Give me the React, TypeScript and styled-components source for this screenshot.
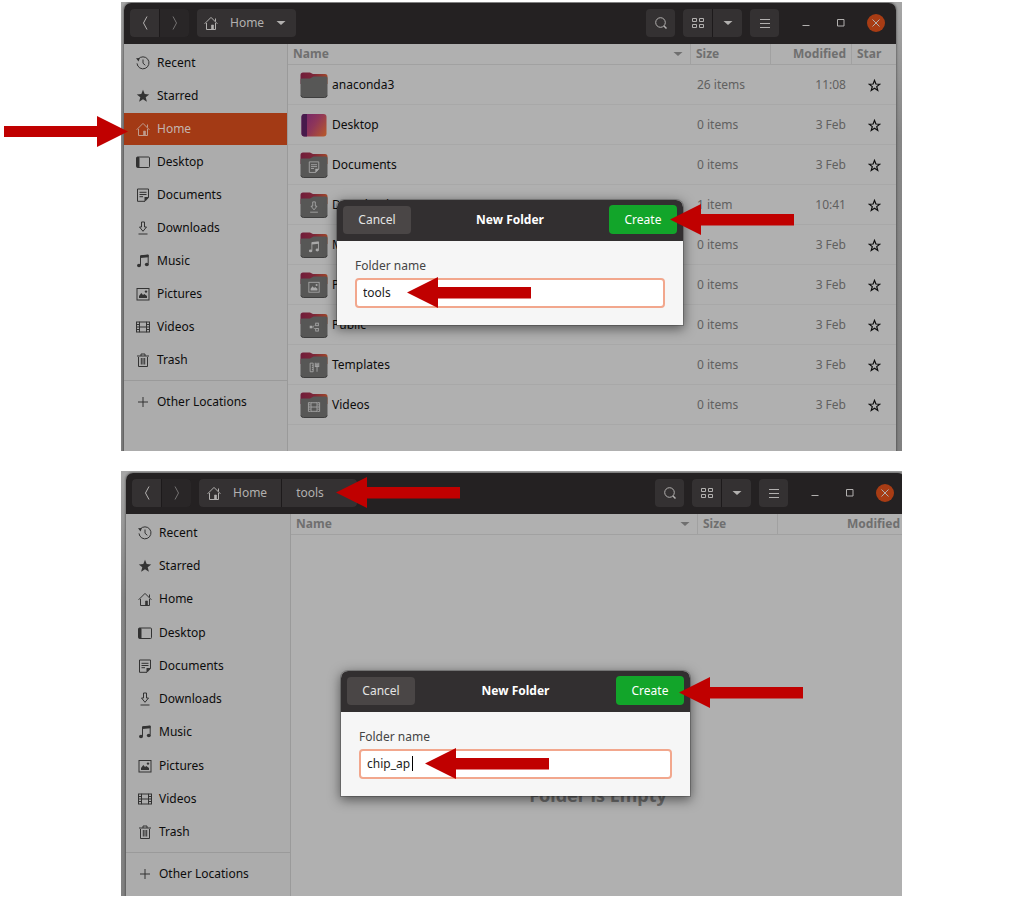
import React from "react";
import styled, { createGlobalStyle } from "styled-components";

const GlobalStyle = createGlobalStyle`
  *, *::before, *::after { box-sizing: border-box; }
  body {
    margin: 0;
    background: #ffffff;
    font-family: "Noto Sans", "Open Sans", sans-serif;
    font-size: 12px;
    line-height: 16px;
    color: #0c0c0c;
  }
  button, input { font: inherit; color: inherit; margin: 0; }
`;

const Page = styled.main`
  display: flex;
  flex-direction: column;
  gap: 20px;
  padding: 2px 120px 5px 121px;
`;

const Screen = styled.section`
  position: relative;
`;

const Desktop = styled.div<{ $height: number; $bleed?: boolean }>`
  position: relative;
  display: flex;
  min-height: ${(p) => p.$height}px;
  padding: ${(p) => (p.$bleed ? "2px 0 0 5px" : "1px 6px 0 3px")};
  overflow: hidden;
  background: linear-gradient(#a6a6a6, #868686 30%, #808080);
`;

const Window = styled.div<{ $bleed?: boolean }>`
  position: relative;
  display: flex;
  flex: 1;
  flex-direction: column;
  margin-right: ${(p) => (p.$bleed ? "-3px" : "0")};
  border-radius: 7px 7px 0 0;
  background: #b0b0b0;
  box-shadow: 0 0 2px 1px rgba(0, 0, 0, 0.3);
`;

const HeaderBar = styled.header`
  display: flex;
  align-items: center;
  justify-content: space-between;
  height: 41px;
  padding: 0 11px 1px 6px;
  border-radius: 7px 7px 0 0;
  background: #242122;
  color: #b2b0af;
`;

const HeaderSide = styled.div`
  display: flex;
  align-items: center;
  gap: 8px;
`;

const Linked = styled.div`
  display: flex;
  gap: 1px;
  border-radius: 4px;
  background: #1d1a1b;
  overflow: hidden;
`;

const BarButton = styled.button<{ $muted?: boolean }>`
  display: flex;
  align-items: center;
  justify-content: center;
  width: 29px;
  height: 28px;
  padding: 0;
  border: 0;
  background: ${(p) => (p.$muted ? "#292627" : "#343132")};
  color: ${(p) => (p.$muted ? "#757373" : "#b2b0af")};
`;

const PathButton = styled(BarButton)`
  width: auto;
  gap: 12px;
  padding: 0 14px 0 8px;
`;

const PathLeaf = styled(PathButton)`
  padding: 0 33px 0 14px;
`;

const HomePath = styled(PathButton)`
  padding: 0 10px 0 7px;
`;

const WindowButtons = styled.div`
  display: flex;
  gap: 17px;
  padding-left: 10px;
`;

const WindowButton = styled.button<{ $close?: boolean }>`
  display: flex;
  align-items: center;
  justify-content: center;
  width: 18px;
  height: 18px;
  padding: 0;
  border: 0;
  border-radius: 9px;
  background: ${(p) => (p.$close ? "#a83c14" : "transparent")};
  color: #b2b0af;
`;

const Body = styled.div`
  display: flex;
  flex: 1;
`;

const Sidebar = styled.nav<{ $width: number }>`
  flex: none;
  width: ${(p) => p.$width}px;
  padding-top: 3px;
  border-right: 1px solid #9a9a9a;
  background: #acacac;
`;

const Places = styled.ul<{ $height: number }>`
  display: flex;
  flex-direction: column;
  justify-content: space-between;
  min-height: ${(p) => p.$height}px;
  margin: 0;
  padding: 0;
  list-style: none;
`;

const Place = styled.a<{ $active?: boolean }>`
  display: flex;
  align-items: center;
  gap: 7px;
  height: 32px;
  padding-left: 12px;
  background: ${(p) => (p.$active ? "#a33a15" : "transparent")};
  color: ${(p) => (p.$active ? "#c4b4ae" : "#0c0c0c")};
  text-decoration: none;

  svg { color: ${(p) => (p.$active ? "#bf9c8e" : "#333333")}; }
`;

const OtherPlaces = styled.div`
  margin-top: 4px;
  padding-top: 5px;
  border-top: 1px solid #9a9a9a;
`;

const Content = styled.div`
  display: flex;
  flex: 1;
  flex-direction: column;
  min-width: 0;
`;

const Files = styled.table`
  width: 100%;
  table-layout: fixed;
  border-spacing: 0;
`;

const HeadCell = styled.th<{ $width?: number; $right?: boolean }>`
  width: ${(p) => (p.$width ? p.$width + "px" : "auto")};
  height: 21px;
  padding: 0 5px;
  border-bottom: 1px solid #a1a1a1;
  color: #6f6f6f;
  font-weight: 700;
  text-align: ${(p) => (p.$right ? "right" : "left")};

  & + & { border-left: 1px solid #a1a1a1; }
`;

const SortLabel = styled.div`
  display: flex;
  align-items: center;
  justify-content: space-between;
  padding-right: 2px;
`;

const Cell = styled.td<{ $align?: string }>`
  height: 40px;
  padding: 0 5px 0 7px;
  border-bottom: 1px solid #a8a8a8;
  color: #606060;
  text-align: ${(p) => p.$align || "left"};
`;

const FileName = styled.div`
  display: flex;
  align-items: center;
  gap: 4px;
  padding-left: 5px;
  color: #0c0c0c;
`;

const StarButton = styled.button`
  display: inline-flex;
  padding: 0;
  border: 0;
  background: none;
  color: #0c0c0c;
  vertical-align: middle;
`;

const EmptyNote = styled.p`
  margin: 248px 0 0;
  color: #6c6c6c;
  font-size: 18px;
  line-height: 24px;
  font-weight: 700;
  text-align: center;
`;

const Overlay = styled.div<{ $top: number }>`
  position: absolute;
  inset: 0;
  display: flex;
  align-items: flex-start;
  justify-content: center;
  padding-top: ${(p) => p.$top}px;
`;

const DialogBox = styled.form<{ $width: number }>`
  position: relative;
  width: ${(p) => p.$width}px;
  border-radius: 7px 7px 0 0;
  background: #f6f6f6;
  box-shadow: 0 3px 12px 1px rgba(0, 0, 0, 0.5), 0 0 0 1px rgba(0, 0, 0, 0.2);
`;

const DialogHeader = styled.div`
  display: flex;
  align-items: center;
  justify-content: space-between;
  height: 41px;
  padding: 0 6px 2px;
  border-radius: 7px 7px 0 0;
  background: #322f30;
  color: #ffffff;
`;

const DialogTitle = styled.h2`
  margin: 0;
  font-size: 12px;
  line-height: 16px;
  font-weight: 700;
`;

const DialogButton = styled.button<{ $primary?: boolean }>`
  width: 68px;
  height: ${(p) => (p.$primary ? 29 : 28)}px;
  padding: 0;
  border: 0;
  border-radius: 4px;
  background: ${(p) => (p.$primary ? "#12a52a" : "#4a4646")};
  color: ${(p) => (p.$primary ? "#ffffff" : "#e4e4e4")};
`;

const DialogBody = styled.div`
  display: flex;
  flex-direction: column;
  gap: 4px;
  padding: 17px 18px;
`;

const FieldLabel = styled.label`
  color: #454545;
`;

const Field = styled.div`
  position: relative;
`;

const TextBox = styled.input`
  display: block;
  width: 100%;
  height: 30px;
  padding: 0 6px 1px;
  border: 2px solid #f2a78d;
  border-radius: 4px;
  background: #ffffff;
  color: #1c1c1c;
  outline: none;
`;

const TextCaret = styled.span`
  position: absolute;
  top: 7px;
  left: 53px;
  width: 1px;
  height: 15px;
  background: #000000;
`;

const Pointer = styled.svg<{ $left: number; $top: number }>`
  position: absolute;
  z-index: 2;
  left: ${(p) => p.$left}px;
  top: ${(p) => p.$top}px;
  width: 124px;
  height: 31px;
  fill: #c00000;
`;

function Arrow({ left, top, flip }: { left: number; top: number; flip?: boolean }) {
  return (
    <Pointer $left={left} $top={top} viewBox="0 0 124 31" aria-hidden="true">
      <path
        d={flip ? "M124 15.500 93 0V10H0V21H93V31Z" : "M0 15.500 31 0V10H124V21.500H31V31Z"}
      />
    </Pointer>
  );
}

const GLYPHS: Record<string, React.ReactNode> = {
  recent: (
    <>
      <path d="M2.200 3.200A6 6 0 1 1 1 7.400" />
      <path d="M7 3.500V7.200L9.300 9.300" />
      <path d="M0 2.200 3.800 2 2.600 5.400Z" fill="currentColor" stroke="none" />
    </>
  ),
  starred: (
    <path
      d="M7 .8 8.700 5.100 13.200 5.400 9.700 8.300 10.900 12.800 7 10.300 3.100 12.800 4.300 8.300 .8 5.400 5.300 5.100Z"
      fill="currentColor"
      stroke="none"
    />
  ),
  home: (
    <>
      <path d="M.6 7.800 7 1.400 13.400 7.800M2.500 7V13.500H11.500V7M11.500 5.500V2.500" />
      <path d="M7.500 13V9H9.500V13Z" fill="currentColor" strokeWidth=".6" />
    </>
  ),
  desktop: (
    <>
      <rect x=".5" y="2" width="13" height="10.500" rx="1" />
      <path d="M1 2.500H3V12H1Z" fill="currentColor" />
    </>
  ),
  documents: (
    <>
      <path d="M1.500 1H12.500V9.500L9 13.300H1.500Z" />
      <path d="M3.500 4.300H10.500M3.500 6.500H10.500M3.500 8.700H7" />
      <path d="M8.500 13.500V9H12.800Z" fill="currentColor" stroke="none" />
    </>
  ),
  downloads: (
    <path d="M5.500 1H8.500V6H10.500L7 10.300 3.500 6H5.500ZM2.500 13H11.500" />
  ),
  music: (
    <>
      <path d="M4.500 11V1.800L12.200 1V9.700" />
      <path d="M4.500 1.500 12.500 .8V3.200L4.500 4Z" fill="currentColor" stroke="none" />
      <ellipse cx="3" cy="11.500" rx="2" ry="1.700" fill="currentColor" stroke="none" />
      <ellipse cx="10.800" cy="10.500" rx="2" ry="1.700" fill="currentColor" stroke="none" />
    </>
  ),
  pictures: (
    <>
      <rect x="1" y="1.500" width="12" height="11.500" />
      <path d="M3 11V9L5.300 6 7 8 8.300 7 11 9V11Z" fill="currentColor" stroke="none" />
      <circle cx="10" cy="4.600" r="1.200" fill="currentColor" stroke="none" />
    </>
  ),
  videos: (
    <>
      <path d="M3.500 2H10.500M3.500 12H10.500M3.500 7H10.500M3.500 1.500V12.500M10.500 1.500V12.500" />
      <path d="M.5 1.500V12.500M13.500 1.500V12.500" />
      <path d="M2 1.500V12.500M12 1.500V12.500" strokeWidth="2" strokeDasharray="1 1.500" />
    </>
  ),
  trash: (
    <>
      <path d="M2.500 4V13.500H11.500V4M1 3H13M5 3V1H9V3" />
      <path d="M5.300 5V11.500M7 5V11.500M8.700 5V11.500" />
    </>
  ),
  other: <path d="M7 2V12M2 7H12" />,
  public: (
    <>
      <path d="M9 4.500 5 7 9 9.700" strokeDasharray="1.500 1" />
      <rect x="2" y="5.500" width="3" height="3" fill="currentColor" stroke="none" />
      <rect x="9" y="2.500" width="3" height="3" />
      <rect x="9" y="8.700" width="3" height="3" />
    </>
  ),
  templates: (
    <>
      <path d="M2.500 2.500H6V12.500H2.500ZM4.500 5H6M4.500 7.500H6M4.500 10H6" />
      <path d="M8.500 2V7M10.500 2V12.500M12.500 2V7M8.500 6.500H12.500M9.500 3V7M11.500 3V7" />
    </>
  ),
};

function Glyph({ name }: { name: string }) {
  return (
    <svg width="14" height="14" viewBox="0 0 14 14" fill="none" stroke="currentColor" aria-hidden="true">
      {GLYPHS[name]}
    </svg>
  );
}

function FolderIcon({ glyph }: { glyph?: string }) {
  return (
    <svg width="28" height="28" viewBox="0 0 28 28" fill="none" aria-hidden="true">
      <defs>
        <linearGradient id="folder-back" x1="0" x2="1">
          <stop offset="0" stopColor="#701c3a" />
          <stop offset=".5" stopColor="#7d2638" />
          <stop offset="1" stopColor="#a0482a" />
        </linearGradient>
      </defs>
      <path d="M.5 4Q.5 1.500 3 1.500H10L13 3H25Q27.500 3 27.500 5.500V13H.5Z" fill="url(#folder-back)" />
      <path
        d="M.5 8.500Q.5 7.500 2 7.500H10L13.500 5.500H26Q27.500 5.500 27.500 7V24Q27.500 26.500 25 26.500H3Q.5 26.500 .5 24Z"
        fill="#575756"
      />
      <path d="M1 24.500Q1.500 26.500 3.500 26.500H24.500Q26.500 26.500 27 24.500" stroke="#3e3e3e" />
      {glyph && (
        <g transform="translate(8 10) scale(.86)" stroke="#a9a9a9" color="#a9a9a9">
          {GLYPHS[glyph]}
        </g>
      )}
    </svg>
  );
}

function DesktopIcon() {
  return (
    <svg width="28" height="28" viewBox="0 0 28 28" aria-hidden="true">
      <defs>
        <linearGradient id="wallpaper" x1="0" y1=".2" x2="1" y2=".8">
          <stop offset="0" stopColor="#74266a" />
          <stop offset=".5" stopColor="#8f3659" />
          <stop offset="1" stopColor="#b4562f" />
        </linearGradient>
      </defs>
      <rect x="1.500" y="3" width="25" height="22.500" rx="3" fill="url(#wallpaper)" />
      <path d="M7 3H4.500Q1.500 3 1.500 6V22.500Q1.500 25.500 4.500 25.500H7Z" fill="#471a4c" />
    </svg>
  );
}

function Caret() {
  return (
    <svg width="10" height="6" viewBox="0 0 10 6" fill="currentColor" aria-hidden="true">
      <path d="M.5 1H9.500L5 5Z" />
    </svg>
  );
}

function Chevron({ forward }: { forward?: boolean }) {
  return (
    <svg width="14" height="14" viewBox="0 0 14 14" fill="none" stroke="currentColor" aria-hidden="true">
      <path d={forward ? "M5 .5 8.500 7 5 13.500" : "M9 .5 5.500 7 9 13.500"} />
    </svg>
  );
}

function StarOutline() {
  return (
    <svg width="13" height="13" viewBox="0 0 14 14" fill="none" stroke="currentColor" strokeWidth="1.300" aria-hidden="true">
      <path d="M7 1.500 8.500 5.400 12.700 5.600 9.400 8.200 10.500 12.300 7 10 3.500 12.300 4.600 8.200 1.300 5.600 5.500 5.400Z" />
    </svg>
  );
}

function HeaderControls() {
  return (
    <HeaderSide>
      <Linked>
        <BarButton aria-label="Search">
          <svg width="12" height="12" viewBox="0 0 12 12" fill="none" stroke="currentColor">
            <circle cx="5.500" cy="5.500" r="4.800" />
            <path d="M9 9 11.500 11.500" strokeWidth="1.500" />
          </svg>
        </BarButton>
      </Linked>
      <Linked>
        <BarButton aria-label="Icon view">
          <svg width="12" height="12" viewBox="0 0 12 12" fill="none" stroke="currentColor">
            <path d="M.5 1.500H4.500V4.500H.5ZM7.500 1.500H11.500V4.500H7.500ZM.5 7.500H4.500V10.500H.5ZM7.500 7.500H11.500V10.500H7.500Z" />
          </svg>
        </BarButton>
        <BarButton aria-label="View options">
          <Caret />
        </BarButton>
      </Linked>
      <Linked>
        <BarButton aria-label="Menu">
          <svg width="10" height="10" viewBox="0 0 10 10" stroke="currentColor">
            <path d="M0 1.500H10M0 5.500H10M0 9.500H10" />
          </svg>
        </BarButton>
      </Linked>
      <WindowButtons>
        <WindowButton aria-label="Minimize">
          <svg width="8" height="8" viewBox="0 0 8 8" stroke="currentColor">
            <path d="M.5 6.500H7.500" />
          </svg>
        </WindowButton>
        <WindowButton aria-label="Maximize">
          <svg width="8" height="8" viewBox="0 0 8 8" fill="none" stroke="currentColor">
            <path d="M.5 .5H7V7H.5Z" />
          </svg>
        </WindowButton>
        <WindowButton $close aria-label="Close">
          <svg width="8" height="8" viewBox="0 0 8 8" stroke="currentColor">
            <path d="M.5 .5 7.500 7.500M7.500 .5 .5 7.500" />
          </svg>
        </WindowButton>
      </WindowButtons>
    </HeaderSide>
  );
}

const PLACES = [
  ["recent", "Recent"],
  ["starred", "Starred"],
  ["home", "Home"],
  ["desktop", "Desktop"],
  ["documents", "Documents"],
  ["downloads", "Downloads"],
  ["music", "Music"],
  ["pictures", "Pictures"],
  ["videos", "Videos"],
  ["trash", "Trash"],
];

function PlacesBar({ width, height, active }: { width: number; height: number; active?: string }) {
  return (
    <Sidebar $width={width} aria-label="Places">
      <Places $height={height}>
        {PLACES.map(([id, label]) => (
          <li key={id}>
            <Place href={"#" + id} $active={id === active}>
              <Glyph name={id} />
              {label}
            </Place>
          </li>
        ))}
      </Places>
      <OtherPlaces>
        <Place href="#other">
          <Glyph name="other" />
          Other Locations
        </Place>
      </OtherPlaces>
    </Sidebar>
  );
}

const FILES = [
  { name: "anaconda3", size: "26 items", modified: "11:08" },
  { name: "Desktop", size: "0 items", modified: "3 Feb" },
  { name: "Documents", size: "0 items", modified: "3 Feb", glyph: "documents" },
  { name: "Downloads", size: "1 item", modified: "10:41", glyph: "downloads" },
  { name: "Music", size: "0 items", modified: "3 Feb", glyph: "music" },
  { name: "Pictures", size: "0 items", modified: "3 Feb", glyph: "pictures" },
  { name: "Public", size: "0 items", modified: "3 Feb", glyph: "public" },
  { name: "Templates", size: "0 items", modified: "3 Feb", glyph: "templates" },
  { name: "Videos", size: "0 items", modified: "3 Feb", glyph: "videos" },
];

function NameHead() {
  return (
    <HeadCell>
      <SortLabel>
        Name
        <Caret />
      </SortLabel>
    </HeadCell>
  );
}

interface DialogProps {
  id: string;
  top: number;
  width: number;
  value: string;
  caret?: boolean;
  children: React.ReactNode;
}

function NewFolderDialog({ id, top, width, value, caret, children }: DialogProps) {
  return (
    <Overlay $top={top}>
      <DialogBox $width={width} role="dialog" aria-label="New Folder" onSubmit={(e) => e.preventDefault()}>
        <DialogHeader>
          <DialogButton type="button">Cancel</DialogButton>
          <DialogTitle>New Folder</DialogTitle>
          <DialogButton $primary type="submit">
            Create
          </DialogButton>
        </DialogHeader>
        <DialogBody>
          <FieldLabel htmlFor={id}>Folder name</FieldLabel>
          <Field>
            <TextBox id={id} type="text" defaultValue={value} />
            {caret && <TextCaret />}
          </Field>
        </DialogBody>
        {children}
      </DialogBox>
    </Overlay>
  );
}

function NavButtons() {
  return (
    <Linked>
      <BarButton aria-label="Back">
        <Chevron />
      </BarButton>
      <BarButton $muted aria-label="Forward">
        <Chevron forward />
      </BarButton>
    </Linked>
  );
}

export default function App() {
  return (
    <>
      <GlobalStyle />
      <Page>
        <Screen>
          <Desktop $height={449}>
            <Window>
              <HeaderBar>
                <HeaderSide>
                  <NavButtons />
                  <Linked>
                    <HomePath>
                      <Glyph name="home" />
                      Home
                      <Caret />
                    </HomePath>
                  </Linked>
                </HeaderSide>
                <HeaderControls />
              </HeaderBar>
              <Body>
                <PlacesBar width={164} height={329} active="home" />
                <Content>
                  <Files>
                    <thead>
                      <tr>
                        <NameHead />
                        <HeadCell $width={80}>Size</HeadCell>
                        <HeadCell $width={81} $right>
                          Modified
                        </HeadCell>
                        <HeadCell $width={45}>Star</HeadCell>
                      </tr>
                    </thead>
                    <tbody>
                      {FILES.map((f) => (
                        <tr key={f.name}>
                          <Cell>
                            <FileName>
                              {f.name === "Desktop" ? <DesktopIcon /> : <FolderIcon glyph={f.glyph} />}
                              {f.name}
                            </FileName>
                          </Cell>
                          <Cell>{f.size}</Cell>
                          <Cell $align="right">{f.modified}</Cell>
                          <Cell $align="center">
                            <StarButton aria-label={"Star " + f.name}>
                              <StarOutline />
                            </StarButton>
                          </Cell>
                        </tr>
                      ))}
                    </tbody>
                  </Files>
                </Content>
              </Body>
              <NewFolderDialog id="folder-tools" top={197} width={346} value="tools">
                <Arrow left={333} top={4} />
                <Arrow left={70} top={77} />
              </NewFolderDialog>
            </Window>
          </Desktop>
          <Arrow left={-117} top={114} flip />
        </Screen>

        <Screen>
          <Desktop $height={425} $bleed>
            <Window $bleed>
              <HeaderBar>
                <HeaderSide>
                  <NavButtons />
                  <Linked>
                    <PathButton>
                      <Glyph name="home" />
                      Home
                    </PathButton>
                    <PathLeaf>tools</PathLeaf>
                  </Linked>
                </HeaderSide>
                <HeaderControls />
              </HeaderBar>
              <Body>
                <PlacesBar width={165} height={331} />
                <Content>
                  <Files>
                    <thead>
                      <tr>
                        <NameHead />
                        <HeadCell $width={80}>Size</HeadCell>
                        <HeadCell $width={128} $right>
                          Modified
                        </HeadCell>
                      </tr>
                    </thead>
                  </Files>
                  <EmptyNote>Folder is Empty</EmptyNote>
                </Content>
              </Body>
              <NewFolderDialog id="folder-chip" top={198} width={349} value="chip_ap" caret>
                <Arrow left={338} top={6} />
                <Arrow left={84} top={77} />
              </NewFolderDialog>
            </Window>
          </Desktop>
          <Arrow left={215} top={6} />
        </Screen>
      </Page>
    </>
  );
}
